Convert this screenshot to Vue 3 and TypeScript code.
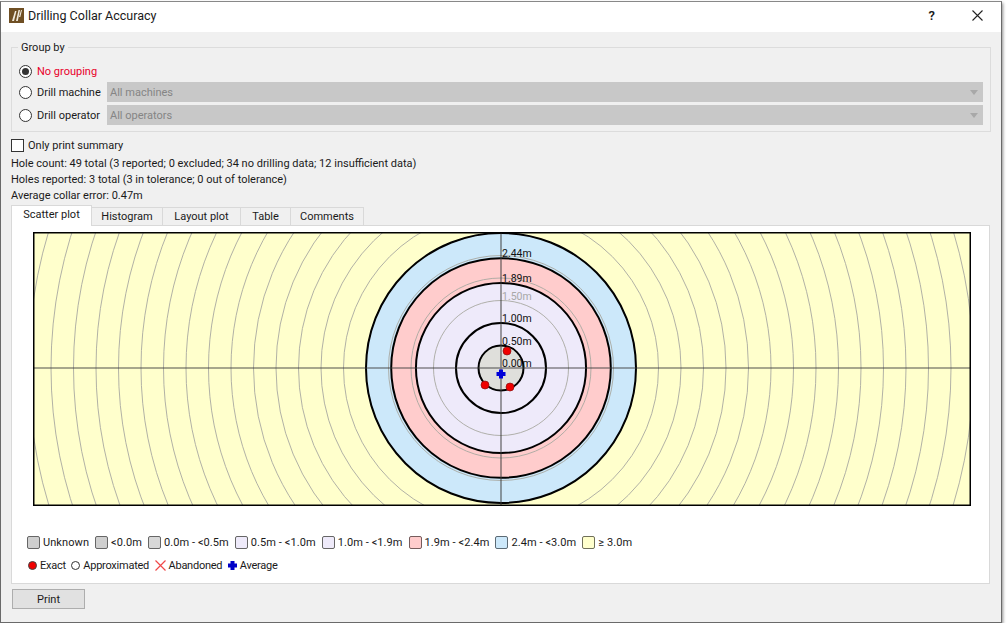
<template>
  <div class="window">
    <header class="titlebar">
      <svg class="app-icon" width="15" height="15" viewBox="0 0 15 15">
        <rect width="15" height="15" fill="#6f4f24" />
        <path d="M3 13 L6 3 L7.5 3 L5 13 Z M7 13 L9.5 2 L11 2 L8.8 13 Z M10 9 L12 2 L13 2 L11.3 9 Z" fill="#efe9dc" />
      </svg>
      <span class="title">Drilling Collar Accuracy</span>
      <span class="help">?</span>
      <svg class="close" width="11" height="11" viewBox="0 0 11 11">
        <path d="M0.5 0.5 L10.5 10.5 M10.5 0.5 L0.5 10.5" stroke="#222" stroke-width="1.1" fill="none" />
      </svg>
    </header>

    <main class="body">
      <section class="groupbox">
        <span class="group-label">Group by</span>
        <div class="group-row first">
          <span class="radio checked"></span>
          <span class="red">No grouping</span>
        </div>
        <div class="group-row second" v-for="g in groups" :key="g.label">
          <span class="radio"></span>
          <span class="radio-label">{{ g.label }}</span>
          <div class="combo">
            <span>{{ g.value }}</span>
            <svg width="8" height="5" viewBox="0 0 8 5"><path d="M0 0 H8 L4 5 Z" fill="#a8a8a8" /></svg>
          </div>
        </div>
      </section>

      <label class="check-row"><span class="checkbox"></span>Only print summary</label>
      <div class="stat first-stat">Hole count: 49 total (3 reported; 0 excluded; 34 no drilling data; 12 insufficient data)</div>
      <div class="stat">Holes reported: 3 total (3 in tolerance; 0 out of tolerance)</div>
      <div class="stat">Average collar error: 0.47m</div>

      <nav class="tabs">
        <span v-for="(t, i) in tabs" :key="t.name" class="tab" :class="{ active: i === 0 }" :style="{ width: t.w + 'px' }">{{ t.name }}</span>
      </nav>

      <section class="panel">
        <svg class="plot" width="938" height="274" viewBox="0 0 938 274">
          <defs>
            <clipPath id="plotclip"><rect x="0" y="0" width="938" height="274" /></clipPath>
          </defs>
          <rect width="938" height="274" fill="#ffffcc" />
          <g clip-path="url(#plotclip)">
            <circle v-for="b in bands" :key="b.m" :cx="cx" :cy="cy" :r="b.m * scale" :fill="b.fill" />
            <circle v-for="r in gridRings" :key="r" :cx="cx" :cy="cy" :r="r" fill="none" stroke="#a8a8a0" stroke-width="0.9" />
            <circle v-for="b in bands" :key="'k' + b.m" :cx="cx" :cy="cy" :r="b.m * scale" fill="none" stroke="#000" stroke-width="2" />
            <path :d="`M0 ${cy} H938 M${cx} 0 V274`" stroke="#3c3c3c" stroke-opacity="0.6" stroke-width="1.6" fill="none" />
          </g>
          <text v-for="l in labels" :key="l.t" class="ring-label" :x="cx + 1" :y="cy - l.m * scale - 1" :fill="l.c">{{ l.t }}</text>
          <circle v-for="(p, i) in points" :key="i" :cx="p[0]" :cy="p[1]" r="4" fill="#f00000" stroke="#8a1010" stroke-width="0.7" />
          <path :d="`M${cx - 2} ${cy + 1.5} h4 v2.5 h2.5 v4 h-2.5 v2.5 h-4 v-2.5 h-2.5 v-4 h2.5 Z`" fill="#0000d8" />
          <rect x="0.75" y="0.75" width="936.5" height="272.5" fill="none" stroke="#000" stroke-width="1.5" />
        </svg>

        <div class="legend">
          <span v-for="s in swatches" :key="s.t" class="legend-item">
            <span class="swatch" :style="{ background: s.fill, borderColor: s.edge }"></span>{{ s.t }}
          </span>
        </div>

        <div class="legend markers">
          <span class="legend-item">
            <span class="dot red-dot"></span>Exact
          </span>
          <span class="legend-item">
            <span class="dot open-dot"></span>Approximated
          </span>
          <span class="legend-item">
            <svg width="11" height="11" viewBox="0 0 11 11"><path d="M0.5 0.5 L10.5 10.5 M10.5 0.5 L0.5 10.5" stroke="#f04848" stroke-width="1.2" fill="none" /></svg>Abandoned
          </span>
          <span class="legend-item">
            <svg width="9" height="9" viewBox="0 0 9 9"><path d="M2.5 0 h4 v2.5 h2.5 v4 h-2.5 v2.5 h-4 v-2.5 h-2.5 v-4 h2.5 Z" fill="#0000c8" /></svg>Average
          </span>
        </div>
      </section>

      <button class="print">Print</button>
    </main>
  </div>
</template>

<script setup lang="ts">
const scale = 45; // px per metre
const cx = 468;
const cy = 136;

const groups = [
  { label: 'Drill machine', value: 'All machines' },
  { label: 'Drill operator', value: 'All operators' },
];

const tabs = [
  { name: 'Scatter plot', w: 81 },
  { name: 'Histogram', w: 71 },
  { name: 'Layout plot', w: 78 },
  { name: 'Table', w: 50 },
  { name: 'Comments', w: 73 },
];

const bands = [
  { m: 3, fill: '#cce8fa' },
  { m: 2.44, fill: '#ffcccc' },
  { m: 1.89, fill: '#eeeafa' },
  { m: 1, fill: '#eeeafa' },
  { m: 0.5, fill: '#dfdfdb' },
];

// grey rings every half metre, out past the plot corners
const gridRings = Array.from({ length: 24 }, (_, i) => (i + 1) * 22.5);

const labels = [
  { t: '2.44m', m: 2.44, c: '#111' },
  { t: '1.89m', m: 1.89, c: '#111' },
  { t: '1.50m', m: 1.5, c: '#a8a8a8' },
  { t: '1.00m', m: 1, c: '#111' },
  { t: '0.50m', m: 0.5, c: '#111' },
  { t: '0.00m', m: 0, c: '#111' },
];

const points = [
  [474, 119],
  [452, 153],
  [477, 155],
];

const swatches = [
  { t: 'Unknown', fill: '#cfcfcf', edge: '#666' },
  { t: '<0.0m', fill: '#cfcfcf', edge: '#666' },
  { t: '0.0m - <0.5m', fill: '#d8d8d8', edge: '#666' },
  { t: '0.5m - <1.0m', fill: '#eeeafa', edge: '#666' },
  { t: '1.0m - <1.9m', fill: '#eeeafa', edge: '#666' },
  { t: '1.9m - <2.4m', fill: '#ffcccc', edge: '#765c5c' },
  { t: '2.4m - <3.0m', fill: '#cce8fa', edge: '#5c6a74' },
  { t: '≥ 3.0m', fill: '#ffffcc', edge: '#70705a' },
];
</script>

<style>
html,
body {
  background: #fff;
}
</style>

<style scoped>
.window {
  box-sizing: border-box;
  width: 1002px;
  height: 622px;
  margin-top: 1px;
  display: flex;
  flex-direction: column;
  background: #f0f0f0;
  border: 1px solid #6a6a6a;
  border-top-color: #888;
  box-shadow: 1px 2px 3px rgba(0, 0, 0, 0.45);
  font-family: Roboto, "Open Sans", sans-serif;
  font-size: 11px;
  color: #1a1a1a;
  overflow: hidden;
}

.titlebar {
  flex: none;
  box-sizing: border-box;
  height: 30px;
  display: flex;
  align-items: center;
  background: #fff;
  padding: 0 0 3px 8px;
}
.app-icon {
  margin-right: 4px;
}
.title {
  font-size: 12.5px;
  flex: 1;
}
.help {
  font-size: 13px;
  font-weight: 600;
  margin-right: 37px;
}
.close {
  margin-right: 18px;
}

.body {
  flex: 1;
  padding: 15px 12px 0 10px;
  display: flex;
  flex-direction: column;
  align-items: flex-start;
}

.groupbox {
  position: relative;
  box-sizing: border-box;
  width: 980px;
  height: 85px;
  border: 1px solid #dcdcdc;
  padding: 13px 7px 0 7px;
}
.group-label {
  position: absolute;
  left: 6px;
  top: -7px;
  padding: 0 3px;
  background: #f0f0f0;
  line-height: 14px;
}
.group-row {
  display: flex;
  align-items: center;
  height: 20px;
}
.group-row.first {
  margin-bottom: 1px;
}
.group-row.second + .group-row.second {
  margin-top: 3px;
}
.radio {
  box-sizing: border-box;
  width: 13px;
  height: 13px;
  border: 1px solid #333;
  border-radius: 50%;
  background: #fff;
  margin-right: 5px;
  position: relative;
  flex: none;
}
.radio.checked::after {
  content: "";
  position: absolute;
  inset: 2px;
  border-radius: 50%;
  background: #333;
}
.red {
  color: #e8002a;
}
.radio-label {
  width: 70px;
  white-space: nowrap;
}
.combo {
  flex: 1;
  height: 20px;
  background: #c8c8c8;
  color: #858585;
  display: flex;
  align-items: center;
  justify-content: space-between;
  padding: 0 5px 0 3px;
}

.check-row {
  display: flex;
  align-items: center;
  height: 16px;
  margin-top: 5px;
  margin-left: 0;
}
.checkbox {
  box-sizing: border-box;
  width: 13px;
  height: 13px;
  border: 1px solid #333;
  background: #fff;
  margin-right: 4px;
}
.stat {
  height: 16px;
  line-height: 16px;
}
.first-stat {
  margin-top: 3px;
}

.tabs {
  display: flex;
  align-items: flex-end;
  height: 20px;
  margin-top: 1px;
  position: relative;
  z-index: 1;
}
.tab {
  box-sizing: border-box;
  height: 18px;
  line-height: 17px;
  text-align: center;
  background: #f0f0f0;
  border: 1px solid #d9d9d9;
  border-left-width: 0;
  border-bottom: none;
}
.tab.active {
  height: 21px;
  line-height: 18px;
  background: #fff;
  border-left-width: 1px;
  margin-bottom: -1px;
}

.panel {
  box-sizing: border-box;
  width: 979px;
  height: 359px;
  background: #fff;
  border: 1px solid #d9d9d9;
  padding: 6px 0 0 21px;
}
.plot {
  display: block;
}
.ring-label {
  font-size: 10.5px;
}
.legend {
  display: flex;
  align-items: center;
  margin-top: 28px;
  margin-left: -6px;
  gap: 6px;
  height: 16px;
  white-space: nowrap;
  letter-spacing: 0.08px;
}
.markers {
  margin-top: 7px;
  margin-left: -5px;
  gap: 5.5px;
  letter-spacing: -0.25px;
}
.legend-item {
  display: flex;
  align-items: center;
  gap: 3px;
}
.swatch {
  box-sizing: border-box;
  width: 13px;
  height: 13px;
  border: 1px solid #666;
  border-radius: 2px;
}
.dot {
  box-sizing: border-box;
  width: 9px;
  height: 9px;
  border-radius: 50%;
}
.red-dot {
  background: #f00000;
  border: 1px solid #444;
}
.open-dot {
  background: #fff;
  border: 1px solid #333;
}

.print {
  width: 73px;
  height: 20px;
  margin-top: 5px;
  margin-left: 1px;
  padding: 0;
  font: inherit;
  color: #1a1a1a;
  background: #e1e1e1;
  border: 1px solid #adadad;
}
</style>
